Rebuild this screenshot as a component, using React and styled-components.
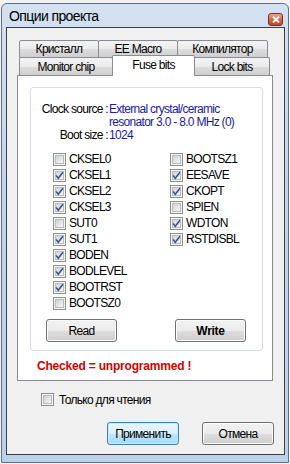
import React from 'react';
import styled, { createGlobalStyle } from 'styled-components';

const GlobalStyle = createGlobalStyle`
  html, body {
    margin: 0;
    padding: 0;
    background: #f2f2f2;
  }
  body {
    font-family: "Liberation Sans", Arial, sans-serif;
    font-size: 12px;
    letter-spacing: -0.7px;
    color: #000;
  }
  * { box-sizing: border-box; }
`;

const Window = styled.div`
  margin: 3px 0 0 1px;
  width: 288px;
  height: 460px;
  border: 1px solid #5f6f86;
  border-radius: 6px 6px 0 0;
  background: linear-gradient(180deg, #d3e1f1 0%, #c3d5eb 40%, #bcd0e8 100%);
  padding: 0 3px 7px 4px;
  display: flex;
  flex-direction: column;
`;

const TitleBar = styled.div`
  height: 23px;
  display: flex;
  align-items: center;
  justify-content: space-between;
  padding: 0 2px 0 3px;
`;

const Title = styled.span`
  font-size: 14px;
  letter-spacing: -0.6px;
  color: #000;
`;

const CloseButton = styled.div`
  width: 15px;
  height: 13px;
  margin-top: 7px;
  border: 1px solid #7b2f22;
  border-radius: 3px;
  background: linear-gradient(180deg, #eaa58f 0%, #d9694d 50%, #c2462a 100%);
  display: flex;
  align-items: center;
  justify-content: center;
`;

const Client = styled.div`
  flex: 1;
  border: 1px solid #3a4048;
  background: #f0f0f0;
  display: flex;
  flex-direction: column;
  padding: 12px 10px 9px 10px;
`;

const TabStrip = styled.div`
  padding-left: 2px;
`;

const TabRow = styled.div`
  display: flex;
  height: ${p => p.$h}px;
  align-items: flex-start;
`;

const Tab = styled.div`
  width: ${p => p.$w}px;
  height: ${p => (p.$active ? p.$h + 3 : p.$h + (p.$bottom ? 0 : 1))}px;
  margin-left: ${p => (p.$first ? 0 : -1)}px;
  margin-top: ${p => (p.$active ? -2 : 0)}px;
  border: 1px solid #898c95;
  border-bottom: ${p => (p.$active || p.$bottom ? 'none' : '1px solid #898c95')};
  border-radius: 2px 2px 0 0;
  background: ${p =>
    p.$active ? '#ffffff' : 'linear-gradient(180deg, #f3f3f3 0%, #ebebeb 50%, #dddddd 51%, #cfcfcf 100%)'};
  position: relative;
  z-index: ${p => (p.$active ? 2 : 1)};
  display: flex;
  justify-content: center;
  align-items: ${p => (p.$active ? 'flex-start' : 'center')};
  padding-top: ${p => (p.$active ? 2 : 0)}px;
  white-space: nowrap;
`;

const Panel = styled.div`
  width: 256px;
  height: 306px;
  border: 1px solid #898c95;
  background: #ffffff;
  padding: 11px 0 0 12px;
`;

const Group = styled.div`
  width: 233px;
  height: 264px;
  border: 1px solid #d5dfe5;
  border-radius: 3px;
  padding: 15px 0 0 0;
`;

const InfoGrid = styled.div`
  display: grid;
  grid-template-columns: 69px auto;
  column-gap: 1px;
  line-height: 13px;
  margin-left: 8px;
`;

const InfoLabel = styled.div`
  text-align: right;
  white-space: nowrap;
`;

const InfoValue = styled.div`
  color: #1a1aa0;
  white-space: nowrap;
`;

const Columns = styled.div`
  display: flex;
  padding-left: 22px;
  margin-top: 9px;
`;

const Column = styled.div`
  width: ${p => p.$w}px;
  display: flex;
  flex-direction: column;
`;

const CheckRow = styled.label`
  height: 16px;
  display: flex;
  align-items: center;
  gap: 3px;
  white-space: nowrap;
`;

const ButtonRow = styled.div`
  display: flex;
  gap: 58px;
  padding-left: 15px;
  margin-top: 8px;
`;

const Button = styled.div`
  width: ${p => p.$w || 71}px;
  height: 23px;
  border: 1px solid ${p => (p.$primary ? '#3c7fb1' : '#707070')};
  border-radius: 3px;
  background: ${p =>
    p.$primary
      ? 'linear-gradient(180deg, #eaf6fd 0%, #d9f0fc 50%, #bee6fd 51%, #a7d9f5 100%)'
      : 'linear-gradient(180deg, #f2f2f2 0%, #ebebeb 50%, #dddddd 51%, #cfcfcf 100%)'};
  box-shadow: inset 0 0 0 1px ${p => (p.$primary ? '#c8ecfc' : '#fcfcfc')};
  display: flex;
  align-items: center;
  justify-content: center;
  font-weight: ${p => (p.$bold ? 700 : 400)};
  letter-spacing: ${p => (p.$bold ? '-0.3px' : '-0.7px')};
`;

const Warning = styled.div`
  color: #d40000;
  font-weight: 700;
  letter-spacing: -0.2px;
  line-height: 12px;
  margin: 9px 0 0 7px;
`;

const ReadOnlyRow = styled(CheckRow)`
  margin: 12px 0 0 24px;
  height: 13px;
  gap: 5px;
`;

const Footer = styled.div`
  display: flex;
  justify-content: flex-end;
  gap: 23px;
  margin-top: 16px;
`;

const Box = ({ checked }) => (
  <svg width="13" height="13" viewBox="0 0 13 13">
    <defs>
      <linearGradient id="cbg" x1="0" y1="0" x2="1" y2="1">
        <stop offset="0" stopColor="#cdd0d4" />
        <stop offset="1" stopColor="#f7f7f7" />
      </linearGradient>
    </defs>
    <rect x="0.5" y="0.5" width="12" height="12" fill="#f6f6f6" stroke="#8e8f8f" />
    <rect x="2.5" y="2.5" width="8" height="8" fill="url(#cbg)" stroke="#b8babd" />
    {checked && (
      <path d="M3 6.4 L5.2 9.2 L10 3.2" fill="none" stroke="#3a4f8e" strokeWidth="1.5" />
    )}
  </svg>
);

const Check = ({ label, checked }) => (
  <CheckRow>
    <Box checked={checked} />
    <span>{label}</span>
  </CheckRow>
);

const left = [
  ['CKSEL0', false],
  ['CKSEL1', true],
  ['CKSEL2', true],
  ['CKSEL3', true],
  ['SUT0', false],
  ['SUT1', true],
  ['BODEN', true],
  ['BODLEVEL', true],
  ['BOOTRST', true],
  ['BOOTSZ0', false],
];

const right = [
  ['BOOTSZ1', false],
  ['EESAVE', true],
  ['CKOPT', true],
  ['SPIEN', false],
  ['WDTON', true],
  ['RSTDISBL', true],
];

export default function App() {
  return (
    <>
      <GlobalStyle />
      <Window>
        <TitleBar>
          <Title>Опции проекта</Title>
          <CloseButton>
            <svg width="8" height="7" viewBox="0 0 8 7">
              <path d="M1 0.5 L7 6.5 M7 0.5 L1 6.5" stroke="#fff" strokeWidth="1.8" />
            </svg>
          </CloseButton>
        </TitleBar>
        <Client>
          <TabStrip>
            <TabRow $h={17}>
              <Tab $first $w={80} $h={17}>Кристалл</Tab>
              <Tab $w={80} $h={17}>EE Macro</Tab>
              <Tab $w={91} $h={17}>Компилятор</Tab>
            </TabRow>
            <TabRow $h={18}>
              <Tab $first $bottom $w={94} $h={18}>Monitor chip</Tab>
              <Tab $active $w={83} $h={18}>Fuse bits</Tab>
              <Tab $bottom $w={76} $h={18}>Lock bits</Tab>
            </TabRow>
          </TabStrip>
          <Panel>
            <Group>
              <InfoGrid>
                <InfoLabel>Clock source :</InfoLabel>
                <InfoValue>
                  External crystal/ceramic
                  <br />
                  resonator 3.0 - 8.0 MHz (0)
                </InfoValue>
                <InfoLabel>Boot size :</InfoLabel>
                <InfoValue>1024</InfoValue>
              </InfoGrid>
              <Columns>
                <Column $w={117}>
                  {left.map(([l, c]) => (
                    <Check key={l} label={l} checked={c} />
                  ))}
                </Column>
                <Column $w={90}>
                  {right.map(([l, c]) => (
                    <Check key={l} label={l} checked={c} />
                  ))}
                </Column>
              </Columns>
              <ButtonRow>
                <Button>Read</Button>
                <Button $bold>Write</Button>
              </ButtonRow>
            </Group>
            <Warning>Checked = unprogrammed !</Warning>
          </Panel>
          <ReadOnlyRow>
            <Box />
            <span>Только для чтения</span>
          </ReadOnlyRow>
          <Footer>
            <Button $primary $w={72}>Применить</Button>
            <Button $w={72}>Отмена</Button>
          </Footer>
        </Client>
      </Window>
    </>
  );
}
